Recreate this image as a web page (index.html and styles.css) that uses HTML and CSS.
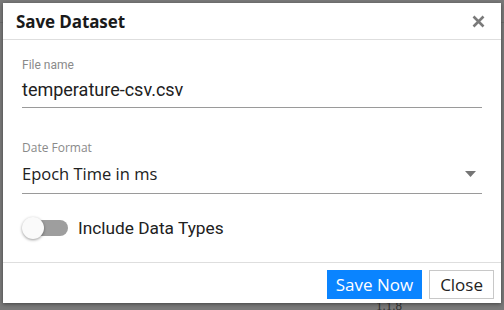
FILE: index.html
```html
<!DOCTYPE html>
<html>
<head>
<meta charset="utf-8">
<link rel="stylesheet" href="styles.css">
</head>
<body>
<div class="backdrop">
  <div class="behind">1.1.8</div>
  <div class="dialog">
    <div class="header">
      <h1 class="title">Save Dataset</h1>
      <button class="x" aria-label="Close">
        <svg width="13" height="13" viewBox="0 0 13 13"><path d="M1.5 1.5L11.5 11.5M11.5 1.5L1.5 11.5" stroke="#7a7a7a" stroke-width="2.6" stroke-linecap="butt"/></svg>
      </button>
    </div>
    <div class="body">
      <div class="field">
        <div class="label">File name</div>
        <div class="value roboto">temperature-csv.csv</div>
      </div>
      <div class="field field2">
        <div class="label seg">Date Format</div>
        <div class="value seg select">
          <span>Epoch Time in ms</span>
          <svg class="caret" width="11" height="6" viewBox="0 0 11 6"><path d="M0 0H11L5.5 6Z" fill="#757575"/></svg>
        </div>
      </div>
      <div class="toggle-row">
        <div class="toggle"><span class="track"></span><span class="thumb"></span></div>
        <span class="toggle-label">Include Data Types</span>
      </div>
    </div>
    <div class="footer">
      <button class="btn primary">Save Now</button>
      <button class="btn">Close</button>
    </div>
  </div>
</div>
</body>
</html>
```
FILE: styles.css
```css
html, body {
  margin: 0;
  padding: 0;
}
body {
  background: #7a7a7a;
  width: 504px;
  height: 310px;
  overflow: hidden;
}
.backdrop {
  position: relative;
  width: 504px;
  height: 310px;
  padding: 3px;
  box-sizing: border-box;
}
.backdrop::before {
  content: "";
  position: absolute;
  left: 0;
  right: 0;
  top: 22px;
  height: 1px;
  background: #6c6c6c;
}
.behind {
  position: absolute;
  left: 376px;
  top: 302px;
  font-family: "Liberation Serif", serif;
  font-size: 13px;
  line-height: 8px;
  color: #333;
}
.dialog {
  position: relative;
  width: 498px;
  height: 300px;
  background: #fff;
  box-shadow: 0 1px 4px rgba(0,0,0,0.45);
  display: flex;
  flex-direction: column;
}
.header {
  height: 36px;
  border-bottom: 1px solid #dedede;
  display: flex;
  align-items: center;
  justify-content: space-between;
  padding: 0 16px 0 13px;
}
.title {
  margin: 0;
  font-family: "Open Sans", sans-serif;
  font-weight: 700;
  font-size: 17px;
  color: #1a1a1a;
  letter-spacing: -0.1px;
}
.x {
  border: 0;
  background: none;
  padding: 0;
  width: 13px;
  height: 13px;
  display: flex;
}
.body {
  flex: 1;
  padding: 18px 19px 0 19px;
  display: flex;
  flex-direction: column;
}
.field {
  width: 460px;
  border-bottom: 1px solid #9a9a9a;
  padding-bottom: 5px;
}
.field2 {
  margin-top: 33px;
  padding-bottom: 7px;
}
.label {
  font-family: Roboto, sans-serif;
  font-size: 12px;
  color: #8a8a8a;
  line-height: 14px;
}
.label.seg {
  font-family: "Open Sans", sans-serif;
  font-size: 12px;
}
.value {
  margin-top: 6px;
  font-size: 18px;
  line-height: 24px;
  color: #212121;
}
.roboto {
  font-family: Roboto, sans-serif;
}
.seg {
  font-family: "Open Sans", sans-serif;
}
.select {
  display: flex;
  align-items: center;
  justify-content: space-between;
  padding-right: 6px;
}
.value.seg {
  font-size: 16.5px;
  margin-top: 7px;
}
.toggle-row {
  margin-top: 22px;
  display: flex;
  align-items: center;
  gap: 9px;
  height: 24px;
}
.toggle {
  position: relative;
  width: 47px;
  height: 22px;
}
.track {
  position: absolute;
  left: 12px;
  top: 3px;
  width: 34px;
  height: 16px;
  border-radius: 8px;
  background: #9e9e9e;
}
.thumb {
  position: absolute;
  left: 0;
  top: 0;
  width: 22px;
  height: 22px;
  border-radius: 50%;
  background: #fafafa;
  box-shadow: 0 1px 3px rgba(0,0,0,0.4);
}
.toggle-label {
  font-family: Roboto, sans-serif;
  font-size: 17.3px;
  color: #212121;
}
.footer {
  border-top: 1px solid #dedede;
  display: flex;
  justify-content: flex-end;
  gap: 7px;
  padding: 7px 7px 4px 0;
}
.btn {
  font-family: "Open Sans", sans-serif;
  font-size: 17px;
  height: 29px;
  padding: 0 10px;
  background: #fff;
  color: #222;
  border: 1px solid #c8c8c8;
  border-radius: 0;
  line-height: 27px;
}
.btn.primary {
  background: #0a84ff;
  border-color: #0a84ff;
  color: #fff;
  padding: 0 8px;
}
```
